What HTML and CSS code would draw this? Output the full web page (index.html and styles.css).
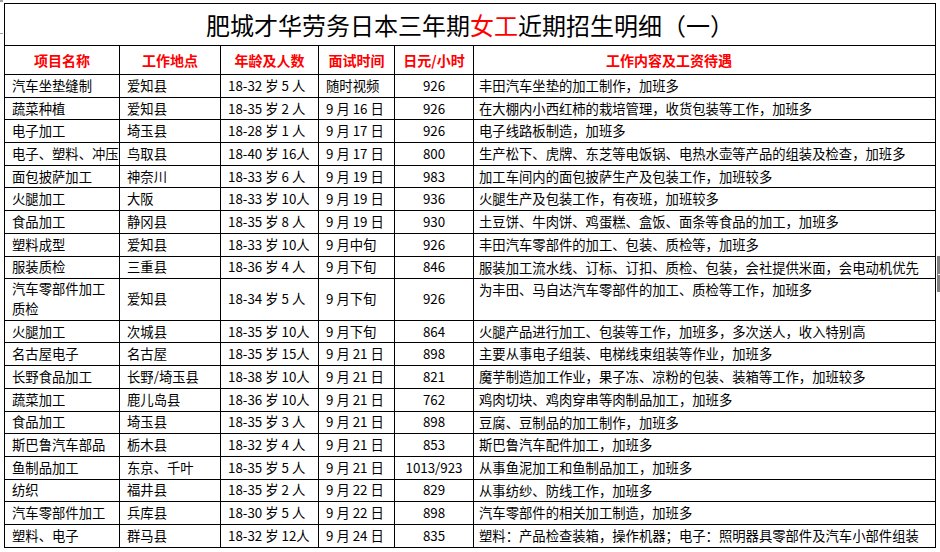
FILE: index.html
```html
<!DOCTYPE html>
<html lang="zh-CN">
<head>
<meta charset="utf-8">
<title>肥城才华劳务日本三年期女工近期招生明细（一）</title>
<link rel="stylesheet" href="styles.css">
</head>
<body>
<div class="mark-tl"></div>
<div class="mark-l"></div>
<div class="scroll-handle"><span></span></div>
<table class="sheet">
  <colgroup>
    <col class="c1"><col class="c2"><col class="c3"><col class="c4"><col class="c5"><col class="c6">
  </colgroup>
  <tr class="title-row">
    <td colspan="6" class="title">肥城才华劳务日本三年期<span class="red">女工</span>近期招生明细（一）</td>
  </tr>
  <tr class="head-row">
    <th>项目名称</th><th>工作地点</th><th>年龄及人数</th><th>面试时间</th><th>日元/小时</th><th class="h6">工作内容及工资待遇</th>
  </tr>
  <tr><td>汽车坐垫缝制</td><td>爱知县</td><td>18-32 岁 5 人</td><td>随时视频</td><td class="num">926</td><td class="desc">丰田汽车坐垫的加工制作，加班多</td></tr>
  <tr><td>蔬菜种植</td><td>爱知县</td><td>18-35 岁 2 人</td><td>9 月 16 日</td><td class="num">926</td><td class="desc">在大棚内小西红柿的栽培管理，收货包装等工作，加班多</td></tr>
  <tr><td>电子加工</td><td>埼玉县</td><td>18-28 岁 1 人</td><td>9 月 17 日</td><td class="num">926</td><td class="desc">电子线路板制造，加班多</td></tr>
  <tr><td class="nw">电子、塑料、冲压</td><td>鸟取县</td><td>18-40 岁 16人</td><td>9 月 17 日</td><td class="num">800</td><td class="desc">生产松下、虎牌、东芝等电饭锅、电热水壶等产品的组装及检查，加班多</td></tr>
  <tr><td>面包披萨加工</td><td>神奈川</td><td>18-33 岁 6 人</td><td>9 月 19 日</td><td class="num">983</td><td class="desc">加工车间内的面包披萨生产及包装工作，加班较多</td></tr>
  <tr><td>火腿加工</td><td>大阪</td><td>18-33 岁 10人</td><td>9 月 19 日</td><td class="num">936</td><td class="desc">火腿生产及包装工作，有夜班，加班较多</td></tr>
  <tr><td>食品加工</td><td>静冈县</td><td>18-35 岁 8 人</td><td>9 月 19 日</td><td class="num">930</td><td class="desc">土豆饼、牛肉饼、鸡蛋糕、盒饭、面条等食品的加工，加班多</td></tr>
  <tr><td>塑料成型</td><td>爱知县</td><td>18-33 岁 10人</td><td>9 月中旬</td><td class="num">926</td><td class="desc">丰田汽车零部件的加工、包装、质检等，加班多</td></tr>
  <tr><td>服装质检</td><td>三重县</td><td>18-36 岁 4 人</td><td>9 月下旬</td><td class="num">846</td><td class="desc">服装加工流水线、订标、订扣、质检、包装，会社提供米面，会电动机优先</td></tr>
  <tr class="double"><td>汽车零部件加工质检</td><td>爱知县</td><td>18-34 岁 5 人</td><td>9 月下旬</td><td class="num">926</td><td class="desc">为丰田、马自达汽车零部件的加工、质检等工作，加班多</td></tr>
  <tr><td>火腿加工</td><td>次城县</td><td>18-35 岁 10人</td><td>9 月下旬</td><td class="num">864</td><td class="desc">火腿产品进行加工、包装等工作，加班多，多次送人，收入特别高</td></tr>
  <tr><td>名古屋电子</td><td>名古屋</td><td>18-35 岁 15人</td><td>9 月 21 日</td><td class="num">898</td><td class="desc">主要从事电子组装、电梯线束组装等作业，加班多</td></tr>
  <tr><td>长野食品加工</td><td>长野/埼玉县</td><td>18-38 岁 10人</td><td>9 月 21 日</td><td class="num">821</td><td class="desc">魔芋制造加工作业，果子冻、凉粉的包装、装箱等工作，加班较多</td></tr>
  <tr><td>蔬菜加工</td><td>鹿儿岛县</td><td>18-36 岁 10人</td><td>9 月 21 日</td><td class="num">762</td><td class="desc">鸡肉切块、鸡肉穿串等肉制品加工，加班多</td></tr>
  <tr><td>食品加工</td><td>埼玉县</td><td>18-35 岁 3 人</td><td>9 月 21 日</td><td class="num">898</td><td class="desc">豆腐、豆制品的加工制作，加班多</td></tr>
  <tr><td>斯巴鲁汽车部品</td><td>栃木县</td><td>18-32 岁 4 人</td><td>9 月 21 日</td><td class="num">853</td><td class="desc">斯巴鲁汽车配件加工，加班多</td></tr>
  <tr><td>鱼制品加工</td><td>东京、千叶</td><td>18-35 岁 5 人</td><td>9 月 21 日</td><td class="num">1013/923</td><td class="desc">从事鱼泥加工和鱼制品加工，加班多</td></tr>
  <tr><td>纺织</td><td>福井县</td><td>18-35 岁 2 人</td><td>9 月 22 日</td><td class="num">829</td><td class="desc">从事纺纱、防线工作，加班多</td></tr>
  <tr><td>汽车零部件加工</td><td>兵库县</td><td>18-30 岁 5 人</td><td>9 月 22 日</td><td class="num">898</td><td class="desc">汽车零部件的相关加工制造，加班多</td></tr>
  <tr><td>塑料、电子</td><td>群马县</td><td>18-32 岁 12人</td><td>9 月 24 日</td><td class="num">835</td><td class="desc">塑料：产品检查装箱，操作机器；电子：照明器具零部件及汽车小部件组装</td></tr>
</table>
</body>
</html>
```
FILE: styles.css
```css
html, body {
  margin: 0;
  padding: 0;
  background: #ffffff;
}
body {
  position: relative;
  width: 940px;
  height: 552px;
  overflow: hidden;
  font-family: "Noto Sans CJK SC", "Noto Sans", sans-serif;
  color: #000000;
}
.sheet {
  margin: 3px 0 0 4px;
  width: 932px;
  table-layout: fixed;
  border-collapse: collapse;
}
.c1 { width: 115px; }
.c2 { width: 101px; }
.c3 { width: 98px; }
.c4 { width: 76px; }
.c5 { width: 79px; }
.c6 { width: 462px; }
.sheet td, .sheet th {
  border: 1px solid #000000;
  padding: 0 2px 0 7px;
  font-size: 13.33px;
  line-height: 20px;
  text-align: left;
  vertical-align: middle;
  overflow: hidden;
}
.sheet tr { height: 22.7px; }
.sheet tr.title-row { height: 42px; }
.sheet tr.head-row { height: 29px; }
.sheet tr.double { height: 41.6px; }
.sheet td.title {
  font-size: 24px;
  line-height: 30px;
  text-align: center;
  padding: 0;
  font-weight: 400;
}
.red { color: #ff0000; }
.sheet th {
  color: #ff0000;
  font-weight: 700;
  font-size: 14px;
  text-align: center;
  padding: 0;
  white-space: nowrap;
}
.sheet th.h6 {
  text-align: left;
  padding-left: 132px;
}
.sheet td.num {
  text-align: center;
  padding: 0;
}
.sheet td.desc {
  vertical-align: top;
  padding: 1px 0 0 5px;
  white-space: nowrap;
}
.sheet td.nw {
  white-space: nowrap;
  padding-right: 0;
}
.mark-tl {
  position: absolute;
  left: 0;
  top: 0;
  width: 3px;
  height: 2px;
  background: #a0a0a0;
}
.mark-l {
  position: absolute;
  left: 0;
  top: 33px;
  width: 3px;
  height: 1px;
  background: #a0a0a0;
}
.scroll-handle {
  position: absolute;
  left: 937px;
  top: 256px;
  width: 3px;
  height: 36px;
  background: #808080;
}
.scroll-handle span {
  position: absolute;
  left: 1px;
  top: 18px;
  width: 2px;
  height: 1px;
  background: #ffffff;
}
```
